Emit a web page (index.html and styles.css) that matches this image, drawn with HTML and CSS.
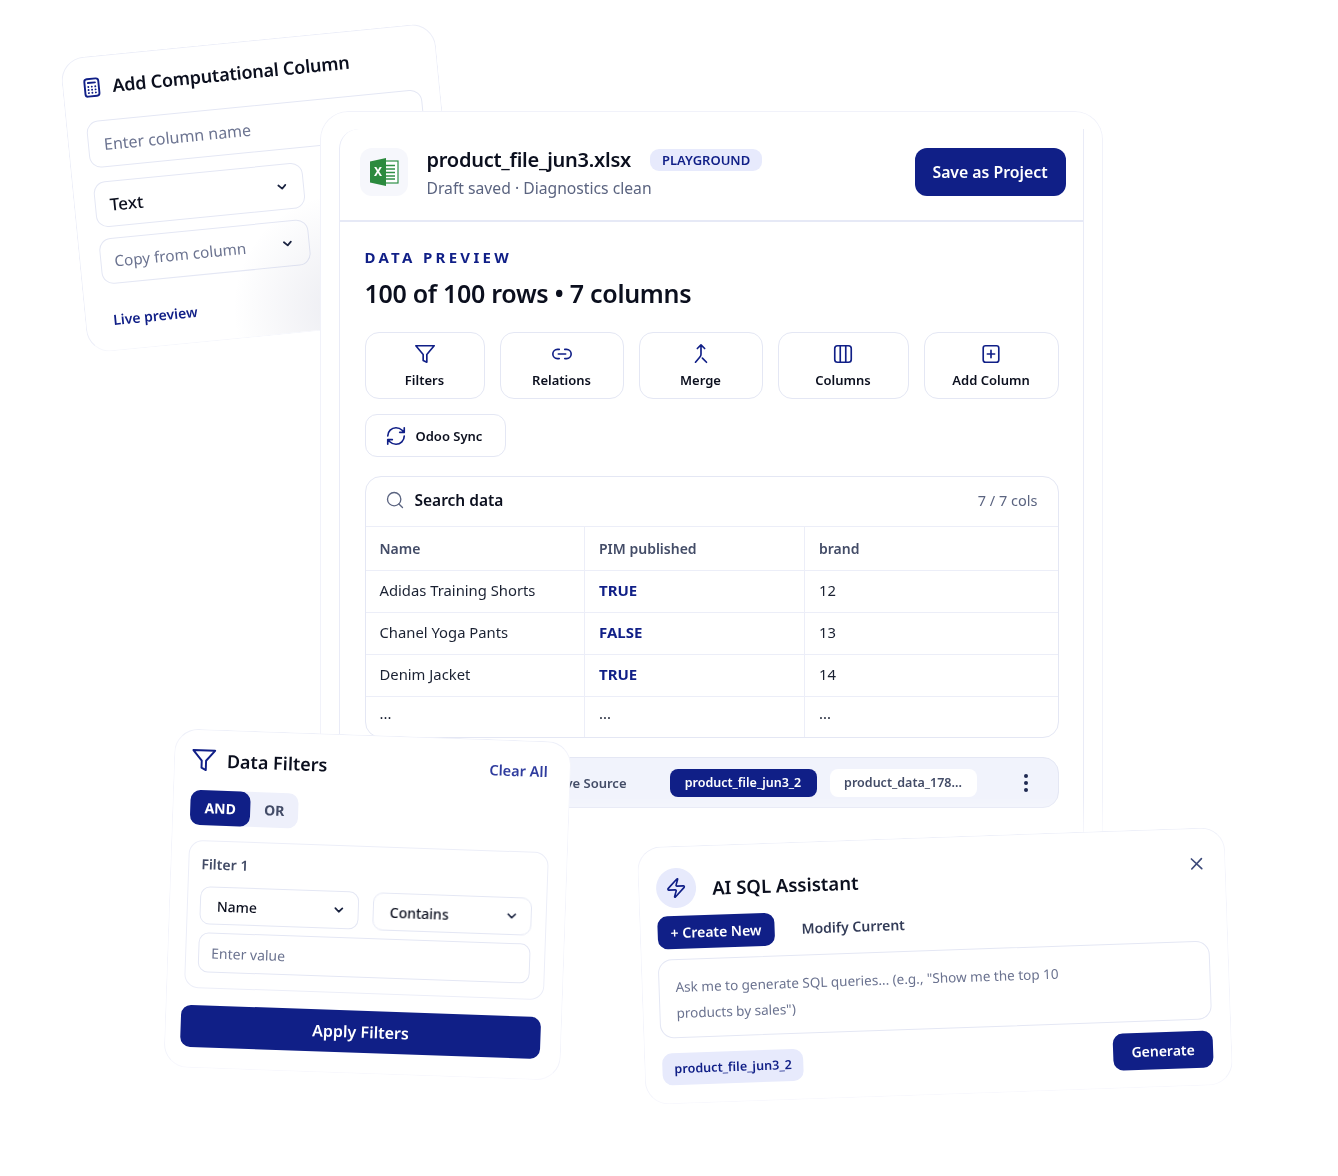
FILE: index.html
```html
<!DOCTYPE html>
<html lang="en">
<head>
    <meta charset="UTF-8">
    <meta name="viewport" content="width=device-width, initial-scale=1.0">
    <title>Data Playground</title>
    <link rel="stylesheet" href="styles.css">
</head>
<body>
<div id="canvas">

    <!-- Add computational column -->
    <section class="card calc-card">
        <h3 class="calc-title">
            <svg class="ico calc-ico" width="21" height="21" viewBox="0 0 24 24"><rect x="4" y="2" width="16" height="20" rx="3"/><path d="M8 6.500h8M8 11h.01M12 11h.01M16 11h.01M8 14.500h.01M12 14.500h.01M16 14.500h.01M8 18h.01M12 18h.01M16 18h.01"/></svg>
            Add Computational Column
        </h3>
        <div class="field muted calc-name">Enter column name</div>
        <div class="field calc-select strong">Text <svg class="chev" width="14" height="14" viewBox="0 0 24 24"><path d="m6 9 6 6 6-6"/></svg></div>
        <div class="field calc-select copy muted">Copy from column <svg class="chev" width="14" height="14" viewBox="0 0 24 24"><path d="m6 9 6 6 6-6"/></svg></div>
        <div class="live">Live preview</div>
    </section>

    <!-- Main preview -->
    <main class="card main-card">
        <div class="panel">
            <header class="panel-head">
                <div class="file-tile">
                    <svg width="30" height="28" viewBox="0 0 30 28">
                        <rect x="12" y="3" width="17" height="22" fill="#fff" stroke="#2f8f46" stroke-width="1.2"/>
                        <path d="M16 7.500h10M16 11h10M16 14.500h10M16 18h10M16 21h10" stroke="#2f8f46" stroke-width="1.600"/>
                        <path d="M1 3.500 17 0v28L1 24.500z" fill="#2b8a3e"/>
                        <text x="5" y="18" class="xl">X</text>
                    </svg>
                </div>
                <div class="file-info">
                    <div class="file-line">
                        <span class="file-name">product_file_jun3.xlsx</span>
                        <span class="badge">PLAYGROUND</span>
                    </div>
                    <div class="file-sub">Draft saved · Diagnostics clean</div>
                </div>
                <button class="btn-save">Save as Project</button>
            </header>

            <div class="panel-body">
                <div class="eyebrow">DATA PREVIEW</div>
                <h2 class="rows-title">100 of 100 rows • 7 columns</h2>

                <div class="tools">
                    <div class="tool">
                        <svg class="ico" width="22" height="22" viewBox="0 0 24 24"><path d="M22 3H2l8 9.460V19l4 2v-8.540z"/></svg>
                        Filters
                    </div>
                    <div class="tool">
                        <svg class="ico" width="22" height="22" viewBox="0 0 24 24"><path d="M9 17H7A5 5 0 0 1 7 7h2M15 7h2a5 5 0 1 1 0 10h-2M8 12h8"/></svg>
                        Relations
                    </div>
                    <div class="tool">
                        <svg class="ico" width="22" height="22" viewBox="0 0 24 24"><path d="m8 6 4-4 4 4M12 2v10.300a4 4 0 0 1-1.200 2.900L6 21M18 21l-4.500-4.500"/></svg>
                        Merge
                    </div>
                    <div class="tool">
                        <svg class="ico" width="22" height="22" viewBox="0 0 24 24"><rect x="3" y="3" width="18" height="18" rx="3"/><path d="M9 3v18M15 3v18"/></svg>
                        Columns
                    </div>
                    <div class="tool">
                        <svg class="ico" width="22" height="22" viewBox="0 0 24 24"><rect x="3.500" y="3" width="17" height="18" rx="2.500"/><path d="M12 8v8M8 12h8"/></svg>
                        Add Column
                    </div>
                </div>

                <div class="sync">
                    <svg class="ico" width="22" height="22" viewBox="0 0 24 24"><path d="M3 12a9 9 0 0 1 9-9 9.750 9.750 0 0 1 6.740 2.740L21 8M21 3v5h-5M21 12a9 9 0 0 1-9 9 9.750 9.750 0 0 1-6.740-2.740L3 16M8 16H3v5"/></svg>
                    Odoo Sync
                </div>

                <div class="table-box">
                    <div class="search-row">
                        <svg class="ico-gray" width="20" height="20" viewBox="0 0 24 24"><circle cx="11" cy="11" r="8"/><path d="m21 21-4.300-4.300"/></svg>
                        <span class="search-label">Search data</span>
                        <span class="col-count">7 / 7 cols</span>
                    </div>
                    <div class="row head"><div>Name</div><div>PIM published</div><div>brand</div></div>
                    <div class="row"><div>Adidas Training Shorts</div><div class="bool">TRUE</div><div>12</div></div>
                    <div class="row"><div>Chanel Yoga Pants</div><div class="bool">FALSE</div><div>13</div></div>
                    <div class="row"><div>Denim Jacket</div><div class="bool">TRUE</div><div>14</div></div>
                    <div class="row last"><div>...</div><div>...</div><div>...</div></div>
                </div>

                <div class="source-bar">
                    <span class="source-label">Active Source</span>
                    <span class="chip on">product_file_jun3_2</span>
                    <span class="chip">product_data_178...</span>
                    <span class="dots"><i></i><i></i><i></i></span>
                </div>
            </div>
        </div>
    </main>

    <!-- Filters -->
    <section class="card filter-card">
        <div class="filter-head">
            <svg class="ico" width="26" height="26" viewBox="0 0 24 24"><path d="M22 3H2l8 9.460V19l4 2v-8.540z"/></svg>
            <h3>Data Filters</h3>
            <span class="clear">Clear All</span>
        </div>
        <div class="toggle"><span class="and">AND</span><span class="or">OR</span></div>
        <div class="filter-box">
            <div class="filter-label">Filter 1</div>
            <div class="filter-selects">
                <div class="field small strong">Name <svg class="chev" width="14" height="14" viewBox="0 0 24 24"><path d="m6 9 6 6 6-6"/></svg></div>
                <div class="field small strong">Contains <svg class="chev" width="14" height="14" viewBox="0 0 24 24"><path d="m6 9 6 6 6-6"/></svg></div>
            </div>
            <div class="field small muted value">Enter value</div>
        </div>
        <button class="btn-apply">Apply Filters</button>
    </section>

    <!-- AI assistant -->
    <section class="card ai-card">
        <svg class="close" width="20" height="20" viewBox="0 0 24 24"><path d="M18 6 6 18M6 6l12 12"/></svg>
        <div class="ai-head">
            <span class="ai-icon">
                <svg class="ico" width="22" height="22" viewBox="0 0 24 24"><path d="M4 14a1 1 0 0 1-.78-1.630l9.900-10.200a.5.5 0 0 1 .86.460l-1.920 6.020A1 1 0 0 0 13 10h7a1 1 0 0 1 .78 1.630l-9.900 10.200a.5.5 0 0 1-.86-.460l1.920-6.020A1 1 0 0 0 11 14z"/></svg>
            </span>
            <h3>AI SQL Assistant</h3>
        </div>
        <div class="ai-tabs">
            <span class="tab-on">+ Create New</span>
            <span class="tab-off">Modify Current</span>
        </div>
        <div class="ai-text">Ask me to generate SQL queries... (e.g., "Show me the top 10<br>products by sales")</div>
        <div class="ai-foot">
            <span class="ai-chip">product_file_jun3_2</span>
            <button class="btn-gen">Generate</button>
        </div>
    </section>

</div>
</body>
</html>
```

FILE: styles.css
```css
* {
    box-sizing: border-box;
}
body {
    margin: 0;
    background-color: #fff;
    font-family: "Noto Sans", "Liberation Sans", sans-serif;
    color: #0b0f1e;
}
h2, h3 {
    margin: 0;
}
svg {
    flex: none;
}
.ico {
    fill: none;
    stroke: #101f87;
    stroke-width: 1.8;
    stroke-linecap: round;
    stroke-linejoin: round;
}
.ico-gray {
    fill: none;
    stroke: #5b6480;
    stroke-width: 1.6;
    stroke-linecap: round;
}
.chev {
    fill: none;
    stroke: #1a2340;
    stroke-width: 3;
    stroke-linecap: round;
    stroke-linejoin: round;
}
#canvas {
    position: relative;
    width: 1338px;
    height: 1176px;
    overflow: hidden;
    filter: blur(0.3px);
}
.card {
    position: absolute;
    background-color: #fff;
    border: 1px solid #eceef8;
}

/* shared inputs */
.field {
    display: flex;
    align-items: center;
    justify-content: space-between;
    border: 1.5px solid #e4e7f4;
    border-radius: 12px;
    background-color: #fff;
}
.muted {
    color: #6b7390;
}
.strong {
    color: #0b0f1e;
    font-weight: 500;
}

/* computational column card */
.calc-card {
    left: 73px;
    top: 40px;
    width: 376px;
    height: 296px;
    padding: 17px 18px;
    border-radius: 24px;
    border-bottom-color: #f6f7fc;
    transform: rotate(-5.600deg);
    z-index: 1;
    overflow: hidden;
}
.calc-card::after {
    content: "";
    position: absolute;
    inset: 0;
    background: radial-gradient(circle 115px at 262px 275px, rgba(90, 95, 140, .12), rgba(90, 95, 140, 0));
}
.calc-ico {
    stroke-width: 2.200;
}
.calc-title {
    display: flex;
    align-items: center;
    gap: 10px;
    font-size: 18px;
    font-weight: 600;
    letter-spacing: -0.2px;
    line-height: 26px;
}
.calc-name {
    width: 337px;
    height: 47px;
    margin-top: 21px;
    padding: 0 15px;
    font-size: 16px;
    margin-left: 1px;
}
.calc-select {
    width: 210px;
    height: 46px;
    margin: 11px 0 0 2px;
    padding: 0 14px;
    font-size: 17px;
}
.calc-name + .calc-select {
    margin-top: 14px;
}
.calc-select.copy {
    padding-left: 13px;
    font-size: 15.300px;
}
.live {
    margin: 26px 0 0 9px;
    color: #101f87;
    font-size: 14px;
    font-weight: 600;
}

/* main card */
.main-card {
    left: 320px;
    top: 111px;
    width: 783px;
    height: 745px;
    padding: 17px 18px 0;
    border-radius: 28px 28px 0 0;
    border-color: #f1f2fa;
    border-bottom: 0;
    z-index: 2;
    -webkit-mask-image: linear-gradient(to bottom, #000 92%, transparent 100%);
    mask-image: linear-gradient(to bottom, #000 92%, transparent 100%);
}
.panel {
    height: 100%;
    border: 1.5px solid #e9ebf7;
    border-top: 0;
    border-bottom: 0;
    border-radius: 20px 0 0 0;
}
.panel-head {
    display: flex;
    align-items: center;
    height: 93px;
    padding: 0 17.500px 5px 19.500px;
    border-bottom: 2px solid #e6e9f6;
}
.file-tile {
    display: flex;
    align-items: center;
    justify-content: center;
    width: 48px;
    height: 48px;
    background-color: #f6f7fc;
    border-radius: 12px;
}
.xl {
    fill: #fff;
    font-size: 12px;
    font-weight: 700;
}
.file-info {
    flex: 1;
    margin-left: 19px;
}
.file-line {
    display: flex;
    align-items: center;
    gap: 19px;
}
.file-name {
    font-size: 20px;
    font-weight: 600;
    letter-spacing: -0.250px;
    line-height: 28px;
}
.badge {
    padding: 0 12px;
    line-height: 22px;
    background-color: #e7eafc;
    border-radius: 9px;
    color: #101f87;
    font-size: 13px;
    font-weight: 600;
}
.file-sub {
    margin-top: 3px;
    color: #5b6480;
    font-size: 15.700px;
    line-height: 22px;
}
.btn-save {
    width: 151px;
    height: 48px;
    border: 0;
    border-radius: 12px;
    background-color: #101f87;
    color: #fff;
    font-family: inherit;
    font-size: 15.800px;
    font-weight: 600;
}
.panel-body {
    padding: 26px 24.500px 0 24.500px;
}
.eyebrow {
    color: #101f87;
    font-size: 15px;
    font-weight: 700;
    letter-spacing: 3.300px;
    line-height: 18px;
}
.rows-title {
    margin-top: 9px;
    font-size: 25px;
    font-weight: 600;
    line-height: 36px;
    letter-spacing: -0.300px;
}
.tools {
    display: grid;
    grid-template-columns: 120px 124px 124px 131px 1fr;
    gap: 15px;
    margin-top: 21px;
}
.tool {
    display: flex;
    flex-direction: column;
    align-items: center;
    justify-content: center;
    gap: 6px;
    height: 67px;
    border: 1.5px solid #e4e7f4;
    border-radius: 14px;
    font-size: 13px;
    font-weight: 600;
}
.sync {
    display: inline-flex;
    align-items: center;
    gap: 9px;
    width: 141px;
    height: 43px;
    margin-top: 15px;
    padding-left: 19px;
    border: 1.5px solid #e4e7f4;
    border-radius: 12px;
    font-size: 13px;
    font-weight: 600;
}
.table-box {
    margin-top: 19px;
    border: 1.5px solid #e4e7f4;
    border-radius: 16px;
    overflow: hidden;
}
.search-row {
    display: flex;
    align-items: center;
    height: 49px;
    padding: 0 20px 3px 19px;
}
.search-label {
    flex: 1;
    margin-left: 10px;
    font-size: 15.500px;
    font-weight: 600;
}
.col-count {
    color: #5b6480;
    font-size: 14.500px;
}
.row {
    display: grid;
    grid-template-columns: 218.500px 220px 1fr;
    height: 42px;
    border-top: 1.5px solid #eceef8;
    font-size: 14.800px;
    color: #1b2233;
}
.row > div {
    display: flex;
    align-items: center;
    padding: 0 0 3px 14px;
}
.row > div + div {
    border-left: 1.5px solid #eceef8;
}
.row.head {
    height: 44px;
    color: #434c67;
    font-size: 14px;
    font-weight: 600;
}
.row.head > div {
    padding-bottom: 1px;
}
.row .bool {
    color: #101f87;
    font-weight: 700;
    font-size: 15px;
}
.row.last {
    height: 41px;
}
.row.last > div {
    padding-bottom: 8px;
}
.source-bar {
    display: flex;
    align-items: center;
    justify-content: flex-end;
    height: 51px;
    margin-top: 19px;
    padding: 0 30px 0 0;
    background-color: #f1f3fc;
    border: 1.5px solid #e4e7f4;
    border-radius: 16px;
}
.source-label {
    margin-right: 43px;
    color: #434c67;
    font-size: 13px;
    font-weight: 600;
}
.chip {
    width: 147px;
    margin-right: 13px;
    text-align: center;
    line-height: 28px;
    background-color: #fff;
    border-radius: 8px;
    color: #434c67;
    font-size: 12.500px;
    font-weight: 600;
}
.chip.on {
    background-color: #101f87;
    color: #fff;
}
.dots {
    display: flex;
    flex-direction: column;
    gap: 3px;
    margin-left: 34px;
}
.dots i {
    width: 4px;
    height: 4px;
    border-radius: 50%;
    background-color: #1f2a52;
}

/* filters card */
.filter-card {
    left: 169px;
    top: 735px;
    width: 397px;
    height: 339px;
    padding: 14px 16px 0;
    border-radius: 24px;
    border-color: #eef0f9 #f3f4fb #f8f8fd;
    transform: rotate(2deg);
    z-index: 3;
}
.filter-head {
    display: flex;
    align-items: center;
    gap: 10px;
    height: 32px;
}
.filter-head h3 {
    flex: 1;
    font-size: 18px;
    font-weight: 600;
}
.clear {
    margin: 0 6px 2px 0;
    color: #2f3c9e;
    font-size: 14.500px;
    font-weight: 600;
}
.toggle {
    display: flex;
    width: 108px;
    margin: 14px 0 0 1px;
    background-color: #eef0fb;
    border-radius: 10px;
    font-size: 14px;
    font-weight: 700;
    line-height: 35px;
    text-align: center;
}
.and {
    width: 60px;
    background-color: #101f87;
    border-radius: 10px;
    color: #fff;
}
.or {
    flex: 1;
    color: #434c67;
}
.filter-box {
    width: 360px;
    height: 148px;
    margin: 15px 0 0 1px;
    padding: 13px 14px 0 12px;
    border: 1.5px solid #eceef8;
    border-radius: 14px;
}
.filter-label {
    color: #434c67;
    font-size: 14px;
    font-weight: 600;
    line-height: 20px;
}
.filter-selects {
    display: grid;
    grid-template-columns: 159px 159px;
    gap: 14px;
    margin-top: 12px;
}
.field.small {
    height: 38px;
    padding: 0 12px 0 16px;
    border-radius: 10px;
    font-size: 14px;
}
.field.small.value {
    height: 40px;
    margin-top: 8px;
    padding-left: 12px;
}
.btn-apply {
    width: 360px;
    height: 42px;
    margin: 17px 0 0 -1px;
    border: 0;
    border-radius: 10px;
    background-color: #101f87;
    color: #fff;
    font-family: inherit;
    font-size: 16px;
    font-weight: 600;
}

/* AI card */
.ai-card {
    left: 641px;
    top: 837px;
    width: 588px;
    height: 258px;
    padding: 21px 18px 0 17px;
    border-radius: 24px;
    border-color: #eef0f9 #f3f4fb #f8f8fd;
    transform: rotate(-2deg);
    z-index: 3;
}
.close {
    position: absolute;
    top: 25px;
    right: 18px;
    fill: none;
    stroke: #3d4a7a;
    stroke-width: 2;
    stroke-linecap: round;
}
.ai-head {
    display: flex;
    align-items: center;
    gap: 16px;
}
.ai-icon {
    display: flex;
    align-items: center;
    justify-content: center;
    width: 40px;
    height: 40px;
    background-color: #e7eafc;
    border-radius: 50%;
}
.ai-head h3 {
    font-size: 18.500px;
    font-weight: 600;
}
.ai-tabs {
    display: flex;
    align-items: center;
    gap: 27px;
    margin-top: 8px;
}
.tab-on {
    padding: 0 13px;
    line-height: 33px;
    background-color: #101f87;
    border-radius: 10px;
    color: #fff;
    font-size: 14px;
    font-weight: 600;
}
.tab-off {
    color: #333c58;
    font-size: 14px;
    font-weight: 600;
}
.ai-text {
    width: 552px;
    height: 79px;
    margin: 10px 0 0 -1px;
    padding: 14px 16px 0;
    border: 1.5px solid #e4e7f4;
    border-radius: 14px;
    color: #6b7390;
    font-size: 13.500px;
    line-height: 26px;
}
.ai-foot {
    display: flex;
    align-items: flex-start;
    justify-content: space-between;
    width: 551px;
    margin: 11px 0 0 0;
}
.ai-chip {
    margin-top: 4px;
    padding: 0 12px;
    line-height: 32px;
    background-color: #e7eafc;
    border-radius: 10px;
    color: #101f87;
    font-size: 12.600px;
    font-weight: 600;
}
.btn-gen {
    width: 100px;
    height: 37px;
    border: 0;
    border-radius: 10px;
    background-color: #101f87;
    color: #fff;
    font-family: inherit;
    font-size: 14px;
    font-weight: 600;
}
```
